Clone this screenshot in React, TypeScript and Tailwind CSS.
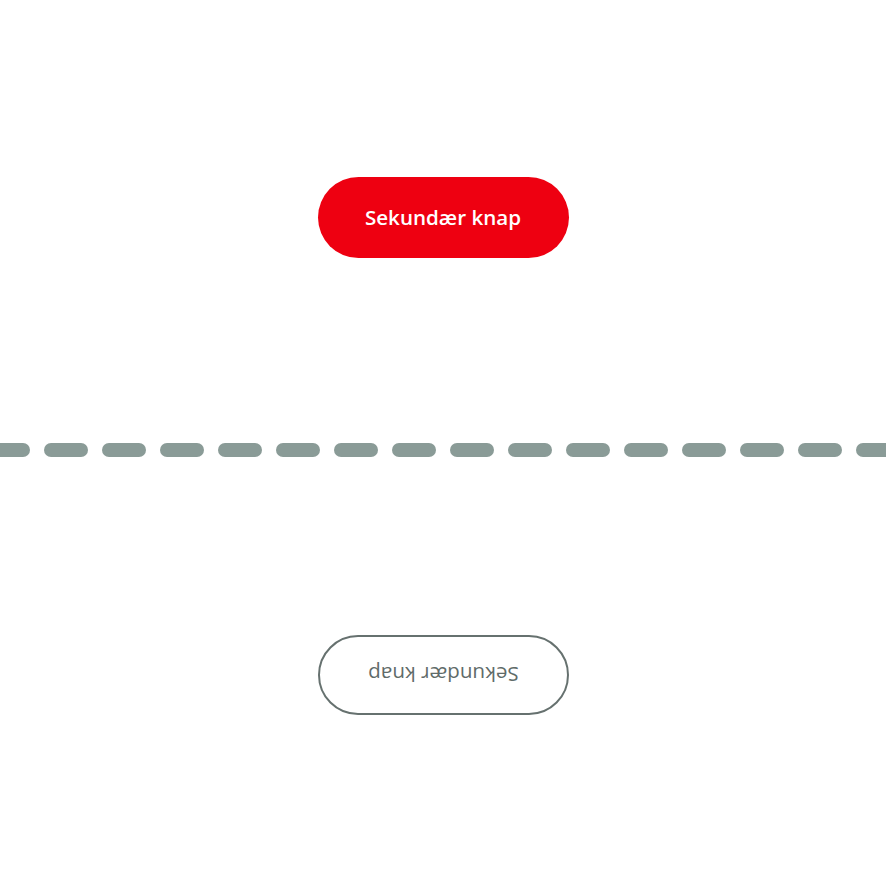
import React from 'react';

const dashes = Array.from({ length: 16 });

const App = () => {
  return (
    <div className="w-[886px] h-[886px] bg-white overflow-hidden flex flex-col items-center" style={{ fontFamily: '"Open Sans", "Noto Sans", sans-serif' }}>
      {/* Primary button */}
      <button className="mt-[177px] w-[251px] h-[81px] rounded-full bg-[#ee0011] text-white text-[20.6px] font-semibold">
        Sekundær knap
      </button>

      {/* Dashed divider */}
      <div className="mt-[185px] w-full overflow-hidden">
        <div className="flex gap-[14px] ml-[-14px]">
          {dashes.map((_, i) => (
            <div key={i} className="shrink-0 w-[44px] h-[14px] rounded-full bg-[#8a9b97]" />
          ))}
        </div>
      </div>

      {/* Flipped outline button */}
      <button className="mt-[178px] w-[251px] h-[80px] rounded-full border-2 border-[#66716f] text-[#5f6b69] text-[20.6px] font-medium rotate-180">
        Sekundær knap
      </button>
    </div>
  );
};

export default App;
